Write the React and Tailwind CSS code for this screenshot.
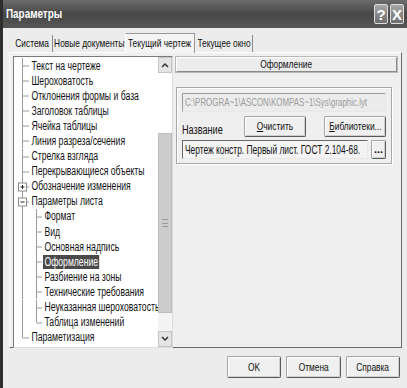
import React from "react";

const FONT = { fontFamily: '"Liberation Sans", Arial, sans-serif' };

const items = [
  { t: "Текст на чертеже", l: 1 },
  { t: "Шероховатость", l: 1 },
  { t: "Отклонения формы и база", l: 1 },
  { t: "Заголовок таблицы", l: 1 },
  { t: "Ячейка таблицы", l: 1 },
  { t: "Линия разреза/сечения", l: 1 },
  { t: "Стрелка взгляда", l: 1 },
  { t: "Перекрывающиеся объекты", l: 1 },
  { t: "Обозначение изменения", l: 1, box: "+" },
  { t: "Параметры листа", l: 1, box: "-" },
  { t: "Формат", l: 2 },
  { t: "Вид", l: 2 },
  { t: "Основная надпись", l: 2 },
  { t: "Оформление", l: 2, sel: true },
  { t: "Разбиение на зоны", l: 2 },
  { t: "Технические требования", l: 2 },
  { t: "Неуказанная шероховатость", l: 2 },
  { t: "Таблица изменений", l: 2, last2: true },
  { t: "Параметизация", l: 1, last: true },
];

function N({ children, c = false, s = "scale-x-[0.76]", className = "" }) {
  return (
    <span className={"inline-block whitespace-nowrap " + s + (c ? " origin-center " : " origin-left ") + className}>
      {children}
    </span>
  );
}

function Lines({ it }) {
  const H = 15.1;
  const m = 7.5;
  const w = it.l === 1 ? 16 : 29;
  const c = "#9a9a9a";
  return (
    <svg width={w} height={H} className="shrink-0">
      <line x1="8.5" y1="0" x2="8.5" y2={it.last ? m : H} stroke={c} />
      {it.l === 1 && <line x1="8.5" y1={m + 0.5} x2="15" y2={m + 0.5} stroke={c} />}
      {it.l === 2 && (
        <>
          <line x1="22.5" y1="0" x2="22.5" y2={it.last2 ? m : H} stroke={c} />
          <line x1="22.5" y1={m + 0.5} x2="28" y2={m + 0.5} stroke={c} />
        </>
      )}
      {it.box && (
        <>
          <rect x="4.5" y={m - 3.5} width="8" height="8" fill="#fff" stroke="#8a8a8a" />
          <line x1="6.5" y1={m + 0.5} x2="10.5" y2={m + 0.5} stroke="#222" />
          {it.box === "+" && <line x1="8.5" y1={m - 1.5} x2="8.5" y2={m + 2.5} stroke="#222" />}
        </>
      )}
    </svg>
  );
}

function Btn({ children, className = "" }) {
  return (
    <div
      className={
        "flex items-center justify-center bg-[#f0f0f0] border border-[#a4a4a4] border-b-[#5a5a5a] border-r-[#5a5a5a] rounded-[2px] shadow-[inset_1px_1px_0_#ffffff,inset_-1px_-1px_0_#cfcfcf] text-[11px] text-[#111] shrink-0 " +
        className
      }
    >
      {children}
    </div>
  );
}

export default function App() {
  return (
    <div style={FONT} className="w-[407px] h-[388px] bg-[#ececec] border-l-[3px] border-[#2e2e2e] flex flex-col overflow-hidden text-[#111]">
      {/* title bar */}
      <div className="h-[28px] shrink-0 flex items-center pl-[3px] pr-[3px] bg-gradient-to-b from-[#6c6c6c] via-[#474747] to-[#565656]">
        <div className="text-white font-bold text-[13px] flex-1">
          <N>Параметры</N>
        </div>
        <div className="flex gap-[2px]">
          <div className="w-[14px] h-[20px] rounded-[2px] border border-[#dcdcdc] bg-gradient-to-b from-[#a8a8a8] to-[#6e6e6e] text-white text-[15px] font-bold flex items-center justify-center leading-none">?</div>
          <div className="w-[14px] h-[20px] rounded-[2px] border border-[#dcdcdc] bg-gradient-to-b from-[#a8a8a8] to-[#6e6e6e] text-white text-[15px] font-bold flex items-center justify-center leading-none">X</div>
        </div>
      </div>

      {/* tabs */}
      <div className="h-[24px] shrink-0 flex items-end pl-[9px] text-[11px]">
        <div className="w-[41px] min-w-0 shrink-0 h-[17px] flex items-center justify-center border-r border-[#8a8a8a]"><N c>Система</N></div>
        <div className="w-[72px] min-w-0 shrink-0 h-[17px] flex items-center justify-center"><N c>Новые документы</N></div>
        <div className="w-[70px] min-w-0 shrink-0 h-[20px] flex items-center justify-center bg-[#f4f4f4] border-x border-t border-[#9a9a9a] border-l-[#ffffff] -mb-[1px] relative z-10"><N c>Текущий чертеж</N></div>
        <div className="w-[58px] min-w-0 shrink-0 h-[17px] flex items-center justify-center border-r border-[#8a8a8a]"><N c>Текущее окно</N></div>
      </div>

      {/* panel */}
      <div className="h-[296px] shrink-0 ml-[6px] mr-[5px] border border-[#a0a0a0] border-l-[#ffffff] border-t-[#ffffff] border-r-[#6a6a6a] border-b-[#6a6a6a] bg-[#efefef] flex gap-[3px] pt-[3px] pl-[3px] pr-[4px]">
        {/* tree */}
        <div className="w-[160px] h-[292px] shrink-0 border border-[#7a7a7a] border-r-[#dcdcdc] border-b-[#dcdcdc] bg-white flex">
          <div className="flex-1 min-w-0 flex flex-col text-[12px] overflow-hidden pt-[1px]">
            {items.map((it, i) => (
              <div key={i} className="h-[15.1px] shrink-0 flex items-center whitespace-nowrap">
                <Lines it={it} />
                <div className="min-w-0 h-[14px] flex items-center">
                  <N s="scale-x-[0.72]" className={it.sel ? "bg-[#4a4a4a] text-white px-[2px] leading-[14px]" : "px-[2px] leading-[14px]"}>{it.t}</N>
                </div>
              </div>
            ))}
          </div>
          <div className="w-[14px] shrink-0 flex flex-col bg-[#f4f4f4]">
            <div className="h-[16px] shrink-0 bg-[#e4e4e4] border border-[#c4c4c4] flex items-center justify-center">
              <svg width="8" height="6"><path d="M1 5 L4 2 L7 5" stroke="#333" strokeWidth="1.5" fill="none" /></svg>
            </div>
            <div className="h-[60px] shrink-0 bg-white" />
            <div className="h-[180px] shrink-0 bg-[#cdcdcd] border border-[#bdbdbd] flex items-center justify-center">
              <div className="w-[6px] h-[8px] border-y border-[#9a9a9a] flex items-center"><div className="w-full border-t border-[#9a9a9a]" /></div>
            </div>
            <div className="flex-1 bg-[#f4f4f4]" />
            <div className="h-[16px] shrink-0 bg-[#e4e4e4] border border-[#c4c4c4] flex items-center justify-center">
              <svg width="8" height="6"><path d="M1 1 L4 4 L7 1" stroke="#333" strokeWidth="1.5" fill="none" /></svg>
            </div>
          </div>
        </div>

        {/* right column */}
        <div className="flex-1 min-w-0 flex flex-col">
          <div className="h-[15px] mt-[1px] border border-[#8a8a8a] border-t-[#ffffff] border-l-[#ffffff] bg-[#ececec] flex items-center justify-center text-[11px] shadow-[0_0_0_1px_#b8b8b8]"><N c>Оформление</N></div>
          <div className="mt-[15px] mr-[5px] h-[77px] border border-[#a8a8a8] shadow-[inset_1px_1px_0_#ffffff,1px_1px_0_#ffffff] px-[5px] pt-[5px] flex flex-col">
            <div className="h-[19px] min-w-0 border border-[#9a9a9a] border-b-[#e8e8e8] border-r-[#e8e8e8] bg-[#ececec] flex items-center px-[2px] text-[11px] text-[#9a9a9a] overflow-hidden"><N s="scale-x-[0.72]">C:\PROGRA~1\ASCON\KOMPAS~1\Sys\graphic.lyt</N></div>
            <div className="h-[21px] mt-[4px] flex items-end">
              <div className="w-[62px] shrink-0 text-[12px] leading-[14px]"><N>Название</N></div>
              <Btn className="w-[62px] h-[21px]"><N c><span className="underline">О</span>чистить</N></Btn>
              <div className="w-[18px] shrink-0" />
              <Btn className="w-[62px] h-[21px]"><N c><span className="underline">Б</span>иблиотеки...</N></Btn>
            </div>
            <div className="h-[19px] mt-[3px] flex gap-[3px]">
              <div className="flex-1 min-w-0 border border-[#6a6a6a] border-b-[#e8e8e8] border-r-[#e8e8e8] bg-[#f4f4f4] flex items-center px-[2px] text-[12px] overflow-hidden"><N s="scale-x-[0.7]">Чертеж констр. Первый лист. ГОСТ 2.104-68.</N></div>
              <Btn className="w-[15px] h-[19px] text-[10px] font-bold">...</Btn>
            </div>
          </div>
        </div>
      </div>

      {/* bottom buttons */}
      <div className="flex-1 flex justify-end items-start pt-[8px] pr-[7px] gap-[5px]">
        <Btn className="w-[54px] h-[22px]"><N c>OK</N></Btn>
        <Btn className="w-[55px] h-[22px]"><N c>Отмена</N></Btn>
        <Btn className="w-[54px] h-[22px]"><N c>Справка</N></Btn>
      </div>
    </div>
  );
}
